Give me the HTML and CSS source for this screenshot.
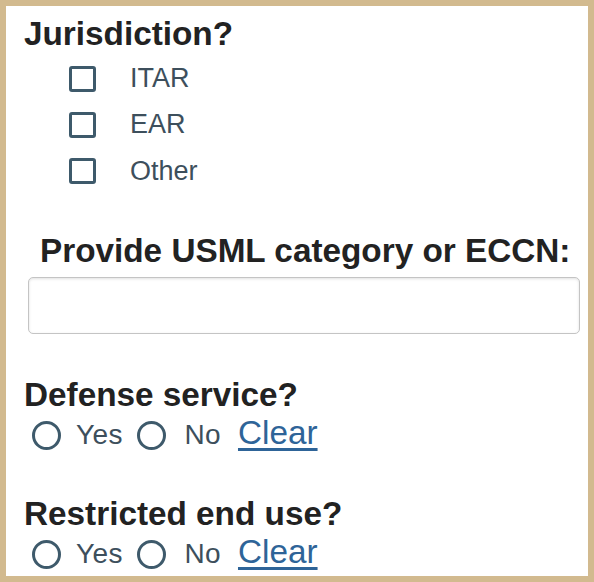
FILE: index.html
```html
<!DOCTYPE html>
<html>
<head>
<meta charset="utf-8">
<link rel="stylesheet" href="styles.css">
</head>
<body>
<div class="panel">
  <h2 class="q">Jurisdiction?</h2>
  <div class="checks">
    <label class="check"><span class="box"></span><span class="lbl">ITAR</span></label>
    <label class="check"><span class="box"></span><span class="lbl">EAR</span></label>
    <label class="check"><span class="box"></span><span class="lbl">Other</span></label>
  </div>
  <h2 class="q sub">Provide USML category or ECCN:</h2>
  <div class="field"></div>
  <h2 class="q gap">Defense service?</h2>
  <div class="radios"><span class="circle"></span><span class="opt">Yes</span><span class="circle"></span><span class="opt">No</span><a class="clear" href="#">Clear</a></div>
  <h2 class="q gap">Restricted end use?</h2>
  <div class="radios"><span class="circle"></span><span class="opt">Yes</span><span class="circle"></span><span class="opt">No</span><a class="clear" href="#">Clear</a></div>
</div>
</body>
</html>
```
FILE: styles.css
```css
html, body {
  margin: 0;
  padding: 0;
  background: #ffffff;
}
.panel {
  box-sizing: border-box;
  width: 594px;
  height: 582px;
  border: 6px solid #d2ba8f;
  padding: 9px 8px 0 18px;
  font-family: "Liberation Sans", Arial, sans-serif;
  overflow: hidden;
}
.q {
  margin: 0;
  font-size: 33.3px;
  line-height: 38px;
  font-weight: bold;
  color: #222222;
}
.checks {
  margin-top: 2.5px;
  display: flex;
  flex-direction: column;
}
.check {
  height: 46.3px;
  display: flex;
  align-items: center;
  padding-left: 45px;
}
.box {
  box-sizing: border-box;
  width: 27px;
  height: 26px;
  border: 3px solid #3e5a6b;
  border-radius: 3px;
}
.lbl {
  margin-left: 34px;
  font-size: 27px;
  color: #3d4f5c;
}
.sub {
  margin-top: 38px;
  padding-left: 16px;
}
.field {
  box-sizing: border-box;
  margin-top: 6.5px;
  margin-left: 4px;
  width: 552px;
  height: 57px;
  border: 1px solid #c4c4c4;
  border-radius: 5px;
  box-shadow: inset 0 1px 3px rgba(0,0,0,0.12);
}
.gap {
  margin-top: 41.7px;
}
.radios {
  font-size: 33.3px;
  line-height: 38px;
  white-space: nowrap;
}
.circle {
  display: inline-block;
  box-sizing: border-box;
  width: 29px;
  height: 29px;
  border: 3px solid #3e5a6b;
  border-radius: 50%;
  vertical-align: -6px;
  margin-left: 8px;
}
.opt {
  font-size: 28px;
  letter-spacing: 0.4px;
  line-height: 38px;
  color: #3d4f5c;
  margin-left: 15px;
}
.opt + .circle {
  margin-left: 14.5px;
}
.circle + .opt + .circle + .opt {
  margin-left: 18px;
}
.clear {
  margin-left: 17px;
  font-size: 33.3px;
  color: #2e6498;
  text-decoration: underline;
  text-decoration-thickness: 3px;
  text-underline-offset: 4px;
}
```
